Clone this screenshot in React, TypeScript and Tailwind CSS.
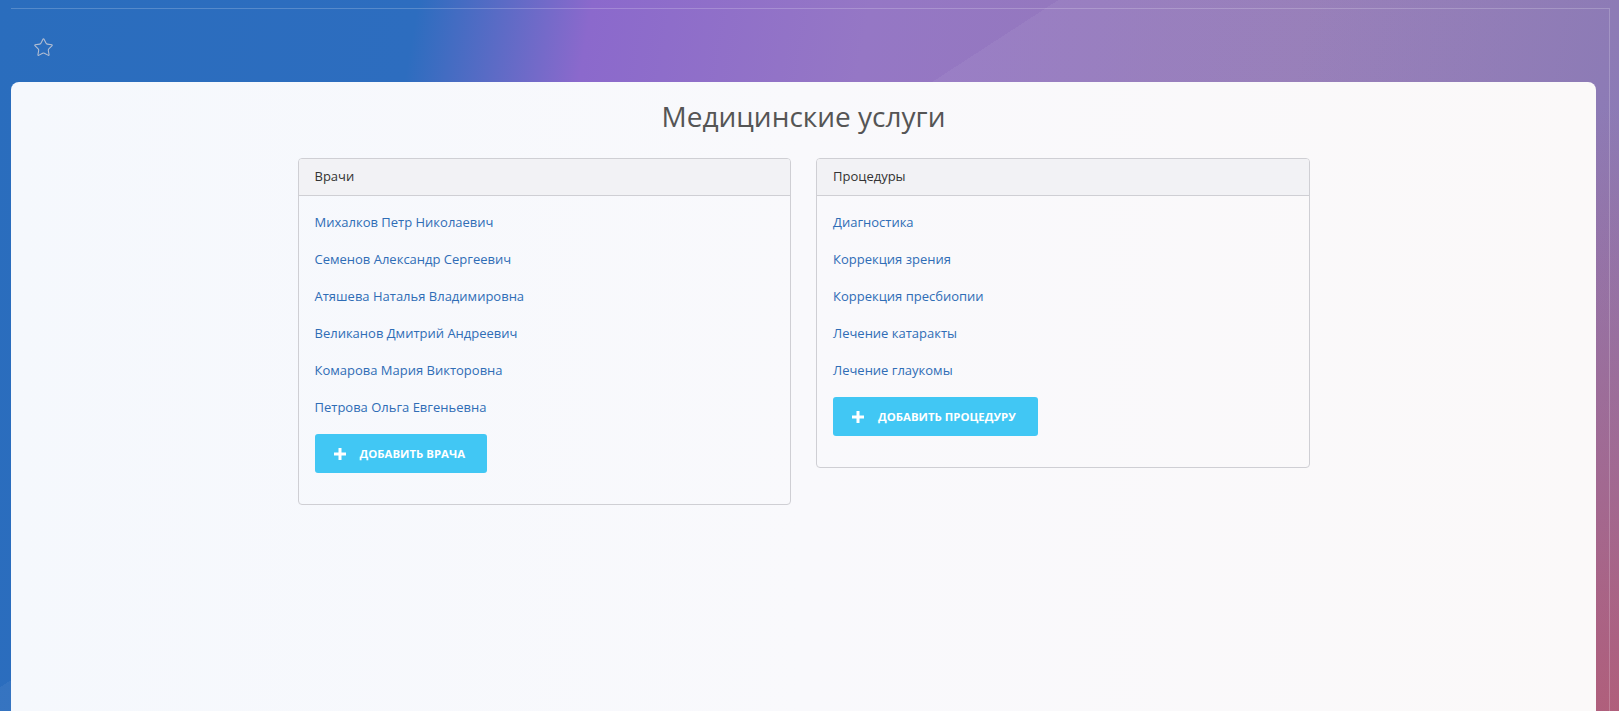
import { Star } from 'lucide-react'

const doctors = [
  'Михалков Петр Николаевич',
  'Семенов Александр Сергеевич',
  'Атяшева Наталья Владимировна',
  'Великанов Дмитрий Андреевич',
  'Комарова Мария Викторовна',
  'Петрова Ольга Евгеньевна',
]

const procedures = [
  'Диагностика',
  'Коррекция зрения',
  'Коррекция пресбиопии',
  'Лечение катаракты',
  'Лечение глаукомы',
]

function PlusIcon() {
  return (
    <svg width="12" height="12" viewBox="0 0 12 12" fill="white">
      <rect x="4.5" y="0" width="3" height="12" />
      <rect x="0" y="4.5" width="12" height="3" />
    </svg>
  )
}

function Panel({ title, items, button }: { title: string; items: string[]; button: string }) {
  return (
    <div className="border border-[#cfcfd4] rounded-[4px] overflow-hidden">
      <div className="h-[37px] flex items-center px-4 bg-[#f2f2f5] border-b border-[#cfcfd4] text-[13px] text-[#333]">
        {title}
      </div>
      <div className="px-4 pt-[8px] pb-[31px]">
        {items.map((item) => (
          <div key={item} className="h-[37px] flex items-center">
            <a href="#" className="text-[13px] text-[#2f6db6] hover:underline">
              {item}
            </a>
          </div>
        ))}
        <button className="mt-[8px] h-[39px] flex items-center gap-[14px] pl-[19px] pr-[22px] bg-[#41c7f4] rounded-[3px] text-white text-[11.4px] font-bold uppercase">
          <PlusIcon />
          {button}
        </button>
      </div>
    </div>
  )
}

export default function App() {
  return (
    <div
      className="h-screen overflow-hidden pt-2 font-['Open_Sans','Noto_Sans',sans-serif] bg-[linear-gradient(147deg,transparent_39%,rgba(255,255,255,0.05)_39%),radial-gradient(55%_85%_at_100%_100%,rgba(172,86,116,1)_0%,rgba(172,86,116,0)_100%),linear-gradient(100deg,#2a6dbd_0%,#2d6dbf_24%,#8b69cc_34%,#9577c5_50%,#9379b6_75%,#8272b0_100%)]"
    >
      <div className="ml-[11px] mr-[9px] h-full border-t border-r border-white/20 flex flex-col">
        <div className="h-[73px] shrink-0 pl-[22px] pt-[28px]">
          <Star size={21} strokeWidth={1.2} className="text-[#b4bfd3]" />
        </div>
        <div className="flex-1 mr-[13px] rounded-t-lg bg-[linear-gradient(90deg,#f5f8fd,#f9f9fc_50%,#fbf9f9)]">
          <h1 className="pt-[16px] text-center text-[28px] leading-[36px] text-[#555]">Медицинские услуги</h1>
          <div className="mt-[24px] w-[1012px] mx-auto grid grid-cols-2 gap-[25px] items-start">
            <Panel title="Врачи" items={doctors} button="Добавить врача" />
            <Panel title="Процедуры" items={procedures} button="Добавить процедуру" />
          </div>
        </div>
      </div>
    </div>
  )
}
